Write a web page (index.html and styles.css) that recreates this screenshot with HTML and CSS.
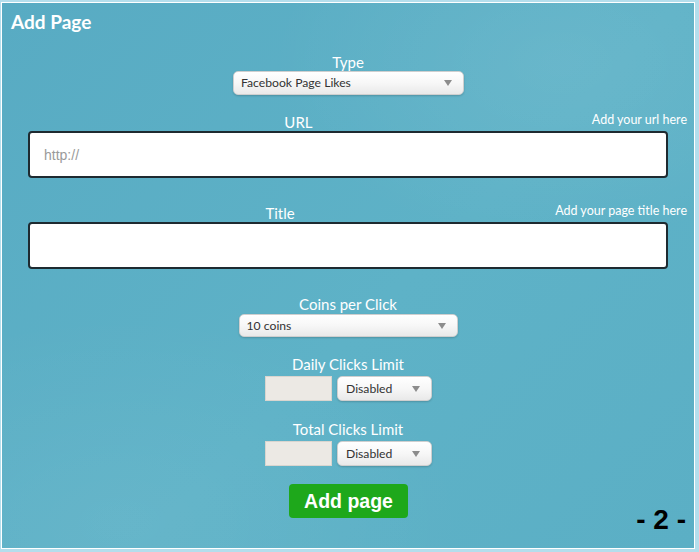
FILE: index.html
```html
<!DOCTYPE html>
<html lang="en">
<head>
<meta charset="utf-8">
<title>Add Page</title>
<link rel="stylesheet" href="styles.css">
</head>
<body>
<div class="frame">
  <div class="panel">
    <h1 class="heading">Add Page</h1>

    <div class="label center">Type</div>
    <div class="select select-type">
      <span class="select-text">Facebook Page Likes</span>
      <span class="arrow"></span>
    </div>

    <div class="field-row">
      <div class="label field-label">URL</div>
      <div class="helper">Add your url here</div>
    </div>
    <input class="text-input" type="text" placeholder="http://">

    <div class="field-row row-title">
      <div class="label field-label">Title</div>
      <div class="helper">Add your page title here</div>
    </div>
    <input class="text-input" type="text">

    <div class="label center gap-coins">Coins per Click</div>
    <div class="select select-coins">
      <span class="select-text">10 coins</span>
      <span class="arrow"></span>
    </div>

    <div class="label center gap-daily">Daily Clicks Limit</div>
    <div class="limit-row">
      <input class="small-input" type="text">
      <div class="select select-small">
        <span class="select-text">Disabled</span>
        <span class="arrow"></span>
      </div>
    </div>

    <div class="label center gap-total">Total Clicks Limit</div>
    <div class="limit-row">
      <input class="small-input" type="text">
      <div class="select select-small">
        <span class="select-text">Disabled</span>
        <span class="arrow"></span>
      </div>
    </div>

    <div class="footer">
      <span></span>
      <button class="submit" type="button">Add page</button>
      <span class="page-num">- 2 -</span>
    </div>
  </div>
</div>
</body>
</html>
```

FILE: styles.css
```css
html, body {
  margin: 0;
  padding: 0;
}
body {
  background: #b4deec;
  width: 699px;
  height: 552px;
  overflow: hidden;
  font-family: "Lato", "Open Sans", sans-serif;
}
.frame {
  margin: 2px 0 0 1px;
  width: 692px;
  height: 545px;
  border: 1px solid #ffffff;
}
.panel {
  height: 545px;
  box-sizing: border-box;
  padding-top: 8px;
  background:
    radial-gradient(ellipse 420px 260px at 560px 60px, rgba(255,255,255,0.07), rgba(255,255,255,0) 70%),
    radial-gradient(ellipse 500px 300px at 120px 520px, rgba(255,255,255,0.05), rgba(255,255,255,0) 70%),
    linear-gradient(135deg, #58abc3 0%, #5eb2c7 55%, #5bafc5 100%);
  display: flex;
  flex-direction: column;
}
.heading {
  margin: 0 0 0 9px;
  font-size: 19px;
  line-height: 22px;
  font-weight: 700;
  color: #ffffff;
}
.label {
  color: #ffffff;
  font-size: 15px;
  line-height: 16px;
}
.center {
  text-align: center;
  margin-top: 21px;
}
.select {
  display: flex;
  align-items: center;
  justify-content: space-between;
  box-sizing: border-box;
  align-self: center;
  background: linear-gradient(#ffffff 0%, #f7f7f7 50%, #e9e9e9 100%);
  border: 1px solid #cfcfcf;
  border-radius: 5px;
  box-shadow: 0 1px 2px rgba(0,0,0,0.18);
  padding: 0 8px 0 7px;
  color: #333333;
  font-size: 12.2px;
}
.select-text {
  line-height: 14px;
}
.arrow {
  width: 0;
  height: 0;
  border-left: 4px solid transparent;
  border-right: 4px solid transparent;
  border-top: 6px solid #8c8c8c;
  margin-right: 3px;
}
.select-type {
  width: 231px;
  height: 24px;
  margin-top: 1px;
  margin-left: 1px;
}
.field-row {
  display: flex;
  align-items: flex-start;
  margin-top: 19px;
  padding: 0 7px 0 3px;
}
.row-title {
  margin-top: 27px;
}
.field-label {
  flex: 1;
  text-align: center;
}
.helper {
  color: #ffffff;
  font-size: 12.5px;
  line-height: 12px;
}
.text-input {
  display: block;
  box-sizing: border-box;
  width: 640px;
  height: 47px;
  margin: 1px 0 0 26px;
  border: 2px solid #1e2a30;
  border-radius: 4px;
  background: #ffffff;
  padding: 0 14px;
  font-family: "Liberation Sans", Arial, sans-serif;
  font-size: 14px;
  color: #333333;
  outline: none;
}
.text-input::placeholder {
  color: #9a9a9a;
}
.gap-coins {
  margin-top: 27px;
}
.select-coins {
  width: 219px;
  height: 23px;
  margin-top: 2px;
  margin-left: 0;
}
.gap-daily {
  margin-top: 19px;
}
.gap-total {
  margin-top: 20px;
}
.limit-row {
  display: flex;
  justify-content: center;
  gap: 5px;
  margin-top: 4px;
  margin-left: 1px;
}
.small-input {
  box-sizing: border-box;
  width: 67px;
  height: 25px;
  margin: 0;
  border: 1px solid #d9d5cf;
  background: #ece9e4;
  outline: none;
}
.select-small {
  width: 95px;
  height: 25px;
  padding-left: 8px;
}
.footer {
  display: grid;
  grid-template-columns: 1fr auto 1fr;
  align-items: end;
  margin-top: 18px;
}
.submit {
  width: 119px;
  height: 34px;
  margin-left: 1px;
  border: none;
  border-radius: 4px;
  background: #1ea81b;
  color: #ffffff;
  font-family: "Liberation Sans", Arial, sans-serif;
  font-size: 19.5px;
  font-weight: 700;
  padding: 0;
  cursor: pointer;
}
.page-num {
  justify-self: end;
  margin-right: 8px;
  font-family: "Liberation Sans", Arial, sans-serif;
  font-weight: 700;
  font-size: 28px;
  line-height: 28px;
  color: #000000;
  margin-bottom: -16px;
}
```
